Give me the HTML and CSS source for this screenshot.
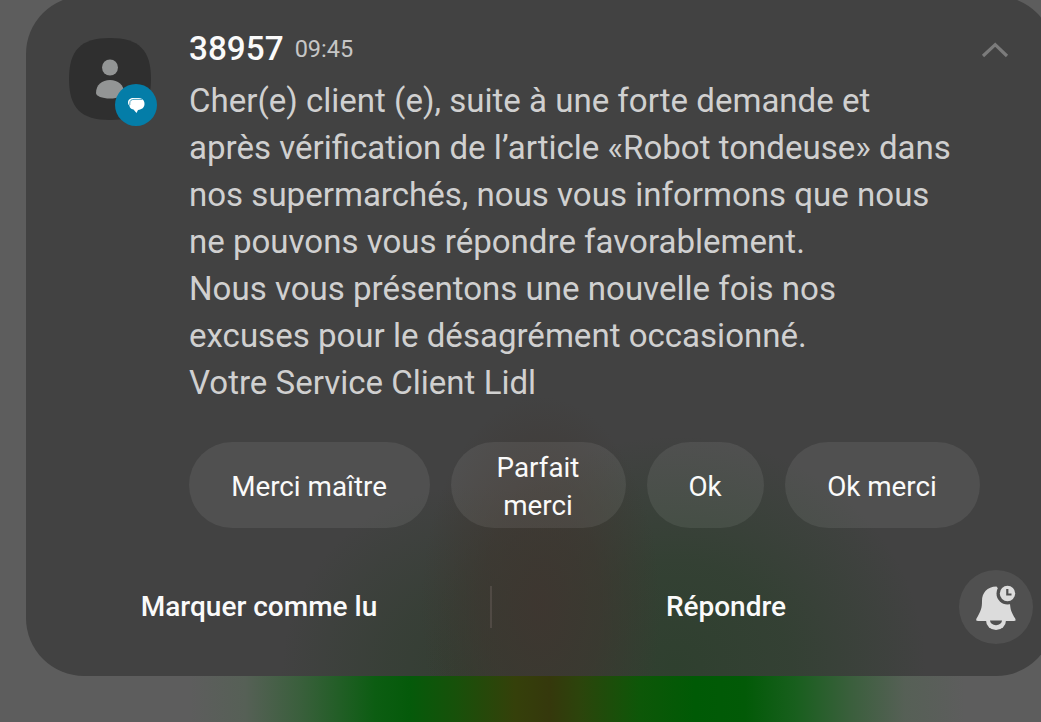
FILE: index.html
```
<!DOCTYPE html>
<html lang="fr">

  <head>
    <meta charset="UTF-8">
    <meta name="viewport" content="width=device-width, initial-scale=1.0">
    <title>Notification</title>
    <link rel="stylesheet" href="styles.css">
  </head>

  <body>
    <section class="card">
      <div class="top">
        <div class="avatar">
          <svg class="person" width="82" height="82" viewBox="0 0 82 82">
            <path fill="#2f2f2f" d="M41 0C70 0 82 12 82 41S70 82 41 82 0 70 0 41 12 0 41 0Z" />
            <circle cx="41" cy="29.500" r="8" fill="#939595" />
            <path fill="#939595" d="M27 55C27 47 33 42 41 42S55 47 55 55C55 58 49 60.500 41 60.500S27 58 27 55Z" />
          </svg>
          <!-- messages app badge -->
          <svg class="badge" width="42" height="42" viewBox="0 0 42 42">
            <circle cx="21" cy="21" r="21" fill="#047da8" />
            <path fill="#fff" d="M13 18.500C13 15.500 15.500 14 18 14H24C26 14 27 15 27.500 15.500C29 16.500 29.500 18 29.500 20C29.500 23.500 27 25.500 23 26L21.500 29L18.500 25.500C15.500 25 14.500 23.500 14.500 21.500C13.500 21 13 20 13 18.500Z" />
            <path fill="none" stroke="#047da8" stroke-width=".7" d="M14.800 21V19C14.800 16.500 16.500 15.400 19 15.400H27" />
          </svg>
        </div>

        <div class="content">
          <header>
            <h2>38957</h2>
            <span class="time">09:45</span>
            <svg class="arrow" width="28" height="16" viewBox="0 0 28 16">
              <path fill="none" stroke="#7b7b7b" stroke-width="3.200" d="M2 14L14.200 2.700L26 14" />
            </svg>
          </header>
          <p>Cher(e) client (e), suite à une forte demande et<br>
            après vérification de l’article «Robot tondeuse» dans<br>
            nos supermarchés, nous vous informons que nous<br>
            ne pouvons vous répondre favorablement.<br>
            Nous vous présentons une nouvelle fois nos<br>
            excuses pour le désagrément occasionné.<br>
            Votre Service Client Lidl</p>
          <div class="replies">
            <button type="button" class="reply long">Merci maître</button>
            <button type="button" class="reply two">Parfait<br>merci</button>
            <button type="button" class="reply short">Ok</button>
            <button type="button" class="reply medium">Ok merci</button>
          </div>
        </div>
      </div>

      <div class="actions">
        <button type="button" class="action">Marquer comme lu</button>
        <span class="line"></span>
        <button type="button" class="action">Répondre</button>
        <button type="button" class="snooze" aria-label="Rappel">
          <svg width="74" height="74" viewBox="0 0 74 74">
            <path fill="#dcdcdc" d="M37.500 16.500C28 16.500 23 23 23 31C23 38 22 41 17.500 48.500C16.700 50.300 17.300 51 19 51H55C56.700 51 57 50.300 56.200 48.500C52.500 42.500 51.500 40 51 34L37.500 16.500Z" />
            <path fill="#dcdcdc" d="M27 50.500A10 9.500 0 0 0 47 50.500Z" />
            <path fill="#505050" d="M31 50.500H43A6 4.700 0 0 1 31 50.500Z" />
            <circle cx="48.500" cy="23.500" r="11" fill="#505050" />
            <circle cx="48.500" cy="23.500" r="7.700" fill="#dcdcdc" />
            <path fill="none" stroke="#505050" stroke-width="2.200" d="M48.300 19V24.500H52.500" />
          </svg>
        </button>
      </div>
    </section>
  </body>

</html>
```
FILE: styles.css
```
* {
  box-sizing: border-box;
}

body {
  margin: 0;
  height: 722px;
  overflow: hidden;
  font-family: Roboto, sans-serif;
  color: #fafafa;
  /* blurred wallpaper behind the card */
  background: linear-gradient(90deg, #5d5d5d 190px, #566056 245px, #3a5f3c 300px, #0c5d12 375px, #055a0a 410px, #17510a 455px, #35400a 515px, #35380c 550px, #2c440c 580px, #0d5708 640px, #005a05 695px, #025a07 745px, #185f1d 795px, #3a5f3c 850px, #566056 905px, #5d5d5d 965px);
}

button {
  padding: 0;
  border: 0;
  font-family: inherit;
  color: inherit;
  background: none;
}

.card {
  width: 1028px;
  height: 680px;
  margin: -4px 0 0 26px;
  padding-top: 35px;
  border-radius: 58px;
  background:
    radial-gradient(ellipse 120px 210px at 515px 610px, rgba(62, 54, 48, .95), rgba(62, 54, 48, .65) 50%, rgba(62, 54, 48, 0)),
    radial-gradient(ellipse 250px 230px at 650px 670px, #2f402f, rgba(47, 64, 47, .75) 45%, rgba(47, 64, 47, 0)),
    radial-gradient(ellipse 190px 190px at 445px 680px, #333e32, rgba(51, 62, 50, .65) 45%, rgba(51, 62, 50, 0)),
    #424242;
}

.top {
  display: flex;
  height: 510px;
}

.avatar {
  position: relative;
  width: 163px;
  padding: 7px 0 0 43px;
}

.person,
.snooze svg,
.arrow {
  display: block;
}

.badge {
  position: absolute;
  left: 89px;
  top: 53px;
}

.content {
  width: 865px;
}

header {
  display: flex;
  height: 46px;
}

h2 {
  margin: 0;
  font-size: 33.3px;
  font-weight: 500;
  line-height: 36px;
}

.time {
  margin-left: 11px;
  font-size: 23.5px;
  line-height: 36px;
  color: #c6c6c6;
}

.arrow {
  margin: 11px 45px 0 auto;
}

p {
  margin: 0;
  font-size: 33.05px;
  line-height: 47px;
  white-space: nowrap;
  color: #d0d0d0;
}

.replies {
  display: flex;
  gap: 21px;
  margin-top: 36px;
}

.reply {
  height: 86px;
  padding: 3px 1px 0 0;
  border-radius: 43px;
  font-size: 27.8px;
  line-height: 38px;
  background: rgba(255, 255, 255, .075);
}

.long {
  width: 241px;
}

.two {
  width: 175px;
}

.short {
  width: 117px;
}

.medium {
  width: 195px;
}

.actions {
  display: flex;
  align-items: center;
  height: 132px;
}

.action {
  width: 466px;
  padding-bottom: 2px;
  font-size: 28px;
  font-weight: 500;
}

.line {
  width: 2px;
  height: 42px;
  margin: 0 1px 0 -2px;
  background: #504a44;
}

.snooze {
  width: 74px;
  height: 74px;
  border-radius: 50%;
  background: #505050;
}
```
